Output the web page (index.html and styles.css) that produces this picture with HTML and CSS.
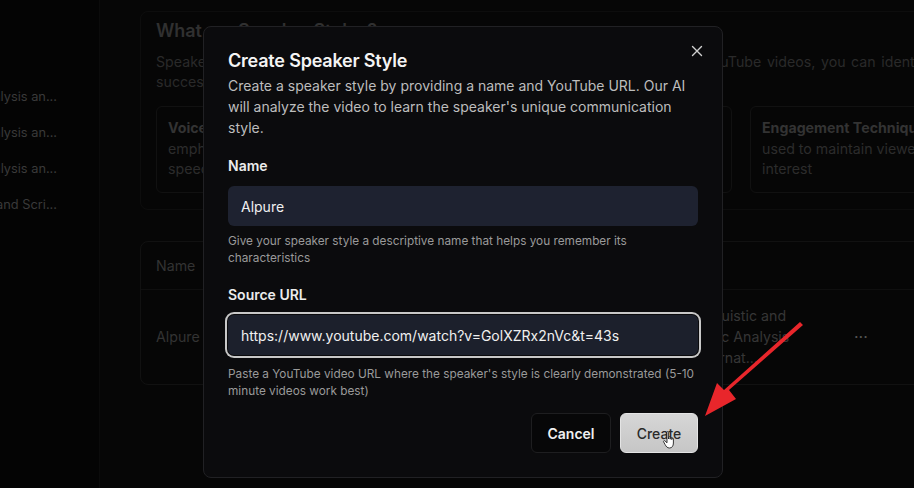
FILE: index.html
```html
<!DOCTYPE html>
<html lang="en">
<head>
<meta charset="utf-8">
<title>Create Speaker Style</title>
<link rel="stylesheet" href="styles.css">
</head>
<body>
<div class="app">
  <aside class="sidebar">
    <div class="side-item"><span>Linguistic Analysis an...</span></div>
    <div class="side-item"><span>Rhetoric Analysis an...</span></div>
    <div class="side-item"><span>Speech Analysis an...</span></div>
    <div class="side-item"><span>Tone and Scri...</span></div>
  </aside>
  <main class="main">
    <section class="intro">
      <h2 class="intro-title">What are Speaker Styles?</h2>
      <p class="intro-text">Speaker styles capture the unique way a speaker communicates. By analyzing YouTube videos, you can identify what makes<br>successful speakers engaging and apply it to your own content.</p>
      <div class="cards">
        <div class="card"><b>Voice Characteristics</b><br>emphasis, pacing and<br>speech rhythm</div>
        <div class="card"><b>Language Patterns</b><br>vocabulary, phrasing and<br>sentence structure</div>
        <div class="card"><b>Story Structure</b><br>how ideas are arranged<br>and delivered</div>
        <div class="card"><b>Engagement Techniques</b><br>used to maintain viewer<br>interest</div>
      </div>
    </section>
    <section class="table">
      <div class="row head">
        <div class="c-name">Name</div>
        <div class="c-desc"></div>
        <div class="c-act"></div>
      </div>
      <div class="row body">
        <div class="c-name">Alpure</div>
        <div class="c-desc">Linguistic and<br>Basic Analysis<br>Alternat...</div>
        <div class="c-act">···</div>
      </div>
    </section>
  </main>
</div>

<div class="modal" role="dialog">
  <button class="close" aria-label="Close">
    <svg width="12" height="12" viewBox="0 0 12 12"><path d="M1.5 1.5 L10.5 10.5 M10.5 1.5 L1.5 10.5" stroke="#d0d0d0" stroke-width="1.4" stroke-linecap="round" fill="none"/></svg>
  </button>
  <h1 class="m-title">Create Speaker Style</h1>
  <p class="m-desc">Create a speaker style by providing a name and YouTube URL. Our AI will analyze the video to learn the speaker's unique communication style.</p>
  <label class="m-label">Name</label>
  <div class="input">Alpure</div>
  <p class="hint">Give your speaker style a descriptive name that helps you remember its characteristics</p>
  <label class="m-label">Source URL</label>
  <div class="input focused">https://www.youtube.com/watch?v=GolXZRx2nVc&amp;t=43s</div>
  <p class="hint hint2">Paste a YouTube video URL where the speaker's style is clearly demonstrated (5-10 minute videos work best)</p>
  <div class="actions">
    <button class="btn cancel">Cancel</button>
    <button class="btn create">Create</button>
  </div>
</div>

<svg class="cursor" width="16" height="20" viewBox="0 0 16 20">
  <path d="M5 2.2 C5 1.3 6.6 1.3 6.6 2.2 L6.6 9 L6.6 7.4 C6.6 6.5 8.2 6.5 8.2 7.4 L8.2 9.2 L8.2 8 C8.2 7.1 9.8 7.1 9.8 8 L9.8 9.6 L9.8 8.8 C9.8 7.9 11.4 7.9 11.4 8.8 L11.4 13 C11.4 16 10 18 7.5 18 C5.2 18 4.2 16.6 3 14.4 L1.6 11.8 C1.1 10.9 2.3 10.2 3 10.9 L5 12.8 Z" fill="#ffffff" stroke="#222" stroke-width="0.9" stroke-linejoin="round"/>
</svg>

<svg class="arrow" width="110" height="100" viewBox="0 0 110 100">
  <path d="M100 5 L26 70 L33 79 L2 96 L14 63 L21 70 L97 2 Z" fill="#e8262b"/>
</svg>
</body>
</html>
```

FILE: styles.css
```css
* { box-sizing: border-box; }
html, body { margin: 0; padding: 0; }
body {
  width: 914px;
  height: 488px;
  overflow: hidden;
  background: #040404;
  font-family: Inter, "Noto Sans", "Liberation Sans", sans-serif;
  color: #e8e8e8;
  position: relative;
}
.app {
  display: flex;
  height: 488px;
}
.sidebar {
  width: 100px;
  flex: none;
  border-right: 1px solid #0b0b0b;
  padding-top: 86px;
  display: flex;
  flex-direction: column;
  gap: 14px;
  overflow: hidden;
}
.side-item {
  height: 22px;
  display: flex;
  justify-content: flex-end;
  padding-right: 42px;
  overflow: hidden;
  white-space: nowrap;
  font-size: 12.8px;
  line-height: 22px;
  color: #3a3a3a;
}
.side-item span { flex: none; }
.main {
  flex: 1;
  padding: 17px 0 0 40px;
  overflow: hidden;
  background: #060606;
}
.intro {
  width: 820px;
  border: 1px solid #0d0d0d;
  border-radius: 8px;
  padding: 6px 0 16px 15px;
  margin-top: -6px;
}
.intro-title {
  margin: 0;
  font-size: 18px;
  line-height: 26px;
  font-weight: 600;
  color: #303030;
  letter-spacing: -0.1px;
}
.intro-text {
  margin: 8px 0 0;
  width: 900px;
  font-size: 14.2px;
  line-height: 20px;
  color: #2a2a2a;
  white-space: nowrap;
  word-spacing: 1.6px;
}
.cards {
  display: flex;
  gap: 18px;
  margin-top: 14px;
}
.card {
  width: 180px;
  flex: none;
  border: 1px solid #111;
  border-radius: 6px;
  padding: 11px 11px 12px;
  font-size: 14.2px;
  line-height: 20.5px;
  color: #2c2c2c;
  white-space: nowrap;
}
.card b { color: #333; font-weight: 700; }
.table {
  margin-top: 31px;
  width: 820px;
  border: 1px solid #111;
  border-radius: 8px;
}
.row {
  display: flex;
  align-items: center;
  padding-left: 15px;
  font-size: 14.2px;
  color: #333;
}
.row.head { height: 48px; border-bottom: 1px solid #0f0f0f; }
.row.body { height: 94px; }
.c-name { width: 537px; flex: none; }
.c-desc { width: 161px; flex: none; line-height: 21px; color: #363636; }
.c-act { width: 40px; flex: none; color: #555; font-size: 16px; }

.modal {
  position: absolute;
  left: 203px;
  top: 26px;
  width: 520px;
  height: 452px;
  background: #0b0b0d;
  border: 1px solid #212124;
  border-radius: 8px;
  padding: 21px 24px 0 24px;
  display: flex;
  flex-direction: column;
}
.close {
  position: absolute;
  right: 18px;
  top: 17px;
  width: 14px;
  height: 14px;
  padding: 0;
  border: 0;
  background: none;
  display: flex;
  align-items: center;
  justify-content: center;
}
.m-title {
  margin: 0;
  font-size: 18px;
  line-height: 26px;
  font-weight: 600;
  color: #f4f4f4;
  letter-spacing: -0.2px;
}
.m-desc {
  margin: 1px 0 0;
  width: 463px;
  font-size: 14px;
  line-height: 21px;
  color: #bdbdbd;
}
.m-label {
  margin-top: 18px;
  font-size: 14px;
  line-height: 20px;
  font-weight: 600;
  color: #ececec;
}
.input {
  margin-top: 10px;
  height: 40px;
  border-radius: 6px;
  background: #1e2230;
  padding: 0 13px;
  display: flex;
  align-items: center;
  font-size: 14px;
  color: #f0f0f0;
}
.input.focused {
  background: #1c202c;
  box-shadow: 0 0 0 1px #0b0b0d, 0 0 0 3px #c8c8c8;
}
.hint {
  margin: 7px 0 0;
  font-size: 11.8px;
  line-height: 17px;
  color: #9a9a9a;
}
.hint2 { margin-top: 11px; }
.actions {
  margin-top: 13px;
  display: flex;
  justify-content: flex-end;
  gap: 9px;
}
.btn {
  height: 40px;
  border-radius: 6px;
  font-family: inherit;
  font-size: 14px;
  font-weight: 600;
}
.cancel {
  width: 80px;
  background: #070708;
  border: 1px solid #1e1e20;
  color: #f0f0f0;
}
.create {
  width: 78px;
  background: linear-gradient(#d6d6d6, #c6c6c6);
  border: 1px solid #e4e4e4;
  color: #2a2a2a;
  font-weight: 500;
}
.cursor {
  position: absolute;
  left: 662px;
  top: 430px;
}
.arrow {
  position: absolute;
  left: 703px;
  top: 320px;
}
```
